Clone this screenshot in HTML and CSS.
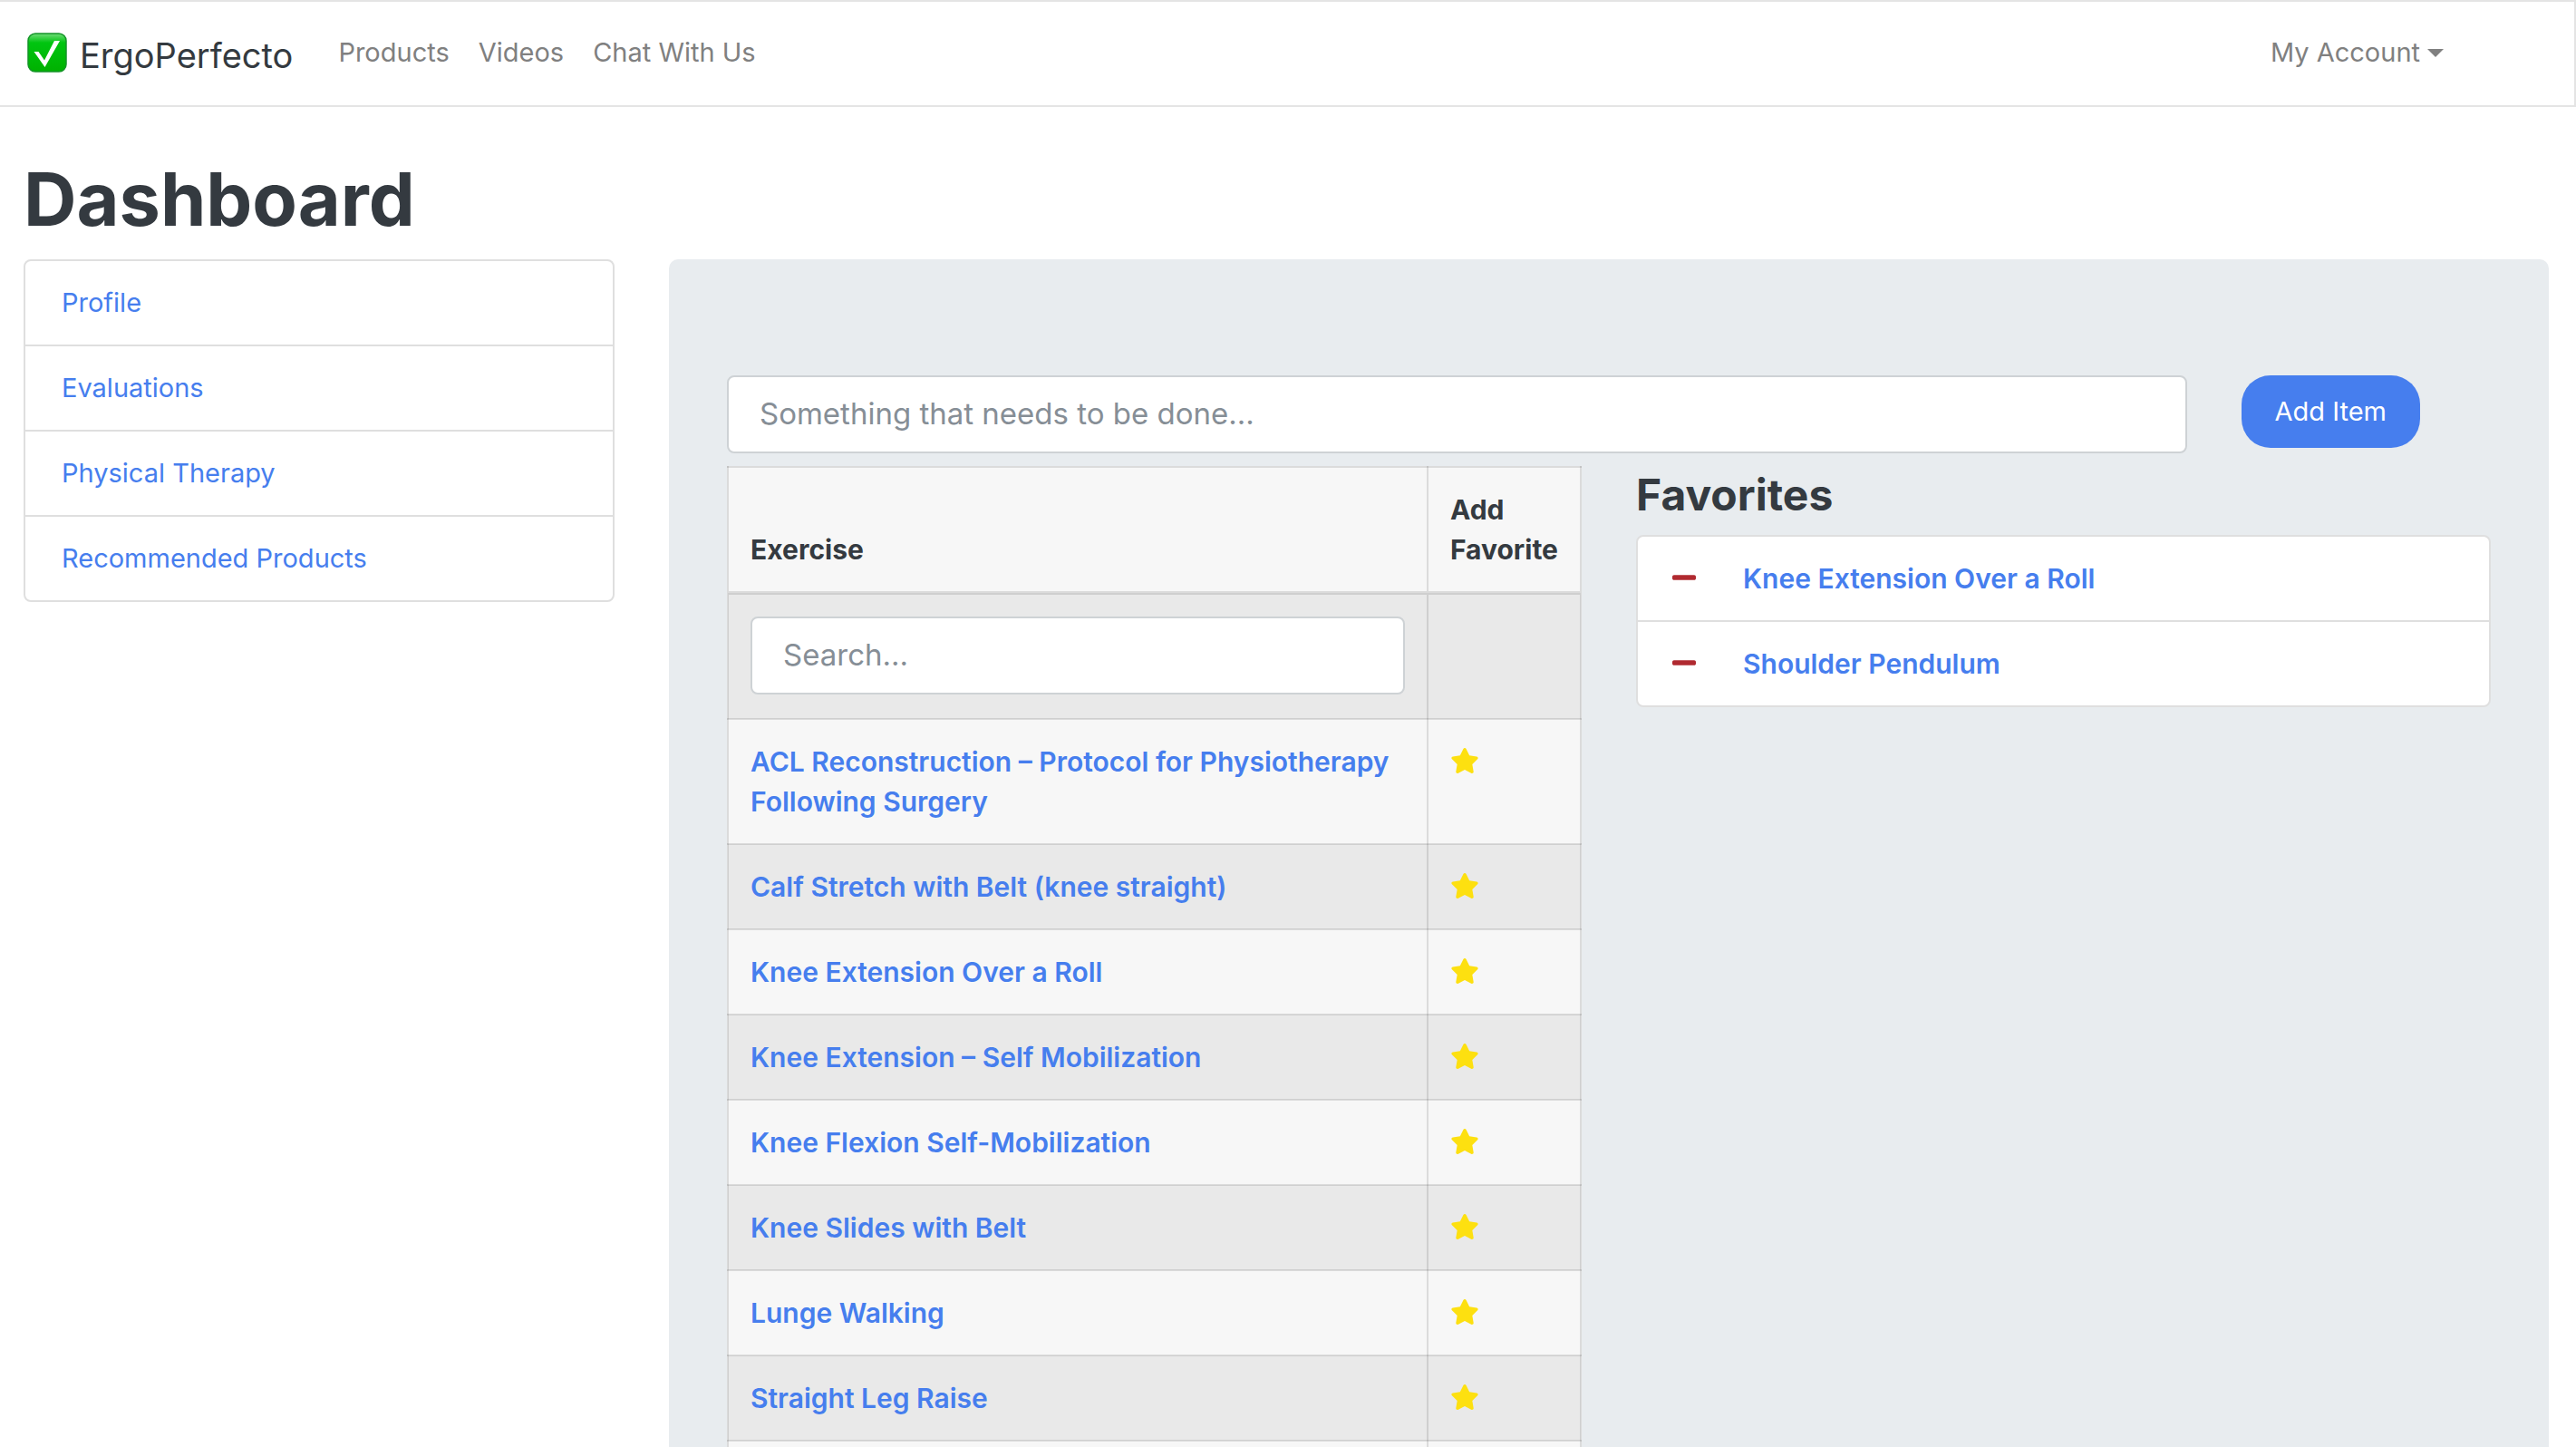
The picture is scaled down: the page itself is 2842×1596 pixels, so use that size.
FILE: index.html
```html
<!DOCTYPE html>
<html lang="en">
<head>
<meta charset="utf-8">
<meta name="viewport" content="width=device-width, initial-scale=1">
<title>ErgoPerfecto – Dashboard</title>
<link rel="stylesheet" href="styles.css">
</head>
<body>
<svg class="sprite" aria-hidden="true">
  <symbol id="star" viewBox="0 0 576 512"><path d="M259.300 17.800L194 150.200 47.900 171.500c-26.200 3.800-36.700 36.100-17.700 54.600l105.700 103-25 145.500c-4.500 26.300 23.200 46 46.400 33.700L288 439.600l130.700 68.700c23.200 12.200 50.900-7.400 46.400-33.700l-25-145.500 105.700-103c19-18.500 8.500-50.800-17.700-54.600L382 150.200 316.700 17.800c-11.700-23.600-45.600-23.900-57.400 0z"/></symbol>
  <symbol id="minus" viewBox="0 0 448 512"><path d="M416 208H32c-17.670 0-32 14.330-32 32v32c0 17.670 14.330 32 32 32h384c17.670 0 32-14.330 32-32v-32c0-17.670-14.330-32-32-32z"/></symbol>
</svg>
<header class="navbar">
  <a class="brand" href="#">
    <svg class="brand-mark" viewBox="0 0 44 44" aria-hidden="true">
      <defs><linearGradient id="mark" x1="0" y1="0" x2="0" y2="1"><stop offset="0" stop-color="#6fdc78"/><stop offset=".24" stop-color="#00c510"/><stop offset="1" stop-color="#00b100"/></linearGradient></defs>
      <rect x="1" y="1" width="42" height="42" rx="8" fill="url(#mark)" stroke="#149428" stroke-width="1.500"/>
      <path d="M7.500 21H12.500L19 30.500 30 9H36L19.500 38Z" fill="#fff"/>
    </svg>
    <span class="brand-name">ErgoPerfecto</span>
  </a>
  <nav class="nav-links">
    <a href="#">Products</a>
    <a href="#">Videos</a>
    <a href="#">Chat With Us</a>
  </nav>
  <button class="account" type="button">My Account<span class="caret"></span></button>
</header>
<main class="page">
  <h1>Dashboard</h1>
  <div class="columns">
    <nav class="list side">
      <a class="item" href="#">Profile</a>
      <a class="item" href="#">Evaluations</a>
      <a class="item" href="#">Physical Therapy</a>
      <a class="item" href="#">Recommended Products</a>
    </nav>
    <section class="panel">
      <form class="add-form">
        <input class="field" type="text" placeholder="Something that needs to be done..." aria-label="New item">
        <button class="add-button" type="button">Add Item</button>
      </form>
      <div class="content">
        <table class="exercises">
          <thead><tr><th>Exercise</th><th class="fav">Add Favorite</th></tr></thead>
          <tbody>
            <tr class="search-row"><td><input class="field" type="text" placeholder="Search..." aria-label="Search exercises"></td><td></td></tr>
            <tr><td><a href="#">ACL Reconstruction – Protocol for Physiotherapy Following Surgery</a></td><td><button class="icon-button" type="button" aria-label="Add favorite"><svg class="star"><use href="#star"/></svg></button></td></tr>
            <tr><td><a href="#">Calf Stretch with Belt (knee straight)</a></td><td><button class="icon-button" type="button" aria-label="Add favorite"><svg class="star"><use href="#star"/></svg></button></td></tr>
            <tr><td><a href="#">Knee Extension Over a Roll</a></td><td><button class="icon-button" type="button" aria-label="Add favorite"><svg class="star"><use href="#star"/></svg></button></td></tr>
            <tr><td><a href="#">Knee Extension – Self Mobilization</a></td><td><button class="icon-button" type="button" aria-label="Add favorite"><svg class="star"><use href="#star"/></svg></button></td></tr>
            <tr><td><a href="#">Knee Flexion Self-Mobilization</a></td><td><button class="icon-button" type="button" aria-label="Add favorite"><svg class="star"><use href="#star"/></svg></button></td></tr>
            <tr><td><a href="#">Knee Slides with Belt</a></td><td><button class="icon-button" type="button" aria-label="Add favorite"><svg class="star"><use href="#star"/></svg></button></td></tr>
            <tr><td><a href="#">Lunge Walking</a></td><td><button class="icon-button" type="button" aria-label="Add favorite"><svg class="star"><use href="#star"/></svg></button></td></tr>
            <tr><td><a href="#">Straight Leg Raise</a></td><td><button class="icon-button" type="button" aria-label="Add favorite"><svg class="star"><use href="#star"/></svg></button></td></tr>
            <tr><td></td><td></td></tr>
          </tbody>
        </table>
        <section class="favorites">
          <h2>Favorites</h2>
          <div class="list">
            <div class="item"><button class="icon-button" type="button" aria-label="Remove favorite"><svg class="minus"><use href="#minus"/></svg></button><a href="#">Knee Extension Over a Roll</a></div>
            <div class="item"><button class="icon-button" type="button" aria-label="Remove favorite"><svg class="minus"><use href="#minus"/></svg></button><a href="#">Shoulder Pendulum</a></div>
          </div>
        </section>
      </div>
    </section>
  </div>
</main>
</body>
</html>
```

FILE: styles.css
```css
* { box-sizing: border-box; }

body {
  margin: 0;
  height: 100vh;
  overflow: hidden;
  display: flex;
  flex-direction: column;
  background: #fff;
  color: #343a40;
  font: 400 29px/44px Inter, "Liberation Sans", sans-serif;
}

a { color: #467eee; text-decoration: none; }

button { font: inherit; border: 0; cursor: pointer; }

h1, h2 { margin: 0; font-weight: 700; }

.sprite { display: none; }

.navbar {
  flex: none;
  display: flex;
  align-items: center;
  height: 118px;
  padding: 0 144px 2px 30px;
  border: 2px solid #e4e4e4;
  border-left: 0;
}

.brand {
  display: flex;
  align-items: center;
  gap: 14px;
  margin-right: 50px;
  font-size: 38px;
  line-height: 56px;
  color: #343a40;
}

.brand-mark { width: 44px; height: 44px; }

.brand-name { padding-top: 6px; }

.nav-links { display: flex; gap: 32px; flex: 1; }

.nav-links a, .account { color: #808080; }

.account {
  display: flex;
  align-items: center;
  gap: 8px;
  padding: 0;
  background: none;
}

.caret {
  border: 9px solid transparent;
  border-top-color: #808080;
  border-bottom: 0;
}

.page {
  flex: 1;
  display: flex;
  flex-direction: column;
  padding: 54px 30px 0 26px;
}

h1 { font-size: 81px; line-height: 96px; padding-bottom: 18px; }

.columns { flex: 1; display: flex; gap: 60px; align-items: flex-start; }

.list {
  background: #fff;
  border: 2px solid #dfdfdf;
  border-radius: 8px;
}

.side { flex: 0 0 652px; }

.item {
  display: flex;
  align-items: center;
  height: 94px;
  padding: 0 40px;
  border-bottom: 2px solid #dfdfdf;
}

.item:last-child { height: 92px; border-bottom: 0; }

.panel {
  flex: 1;
  align-self: stretch;
  padding: 128px 64px 0;
  background: #e8ecef;
  border-radius: 10px 10px 0 0;
}

.add-form {
  display: flex;
  align-items: flex-start;
  gap: 60px;
  margin-bottom: 14px;
}

.field {
  display: block;
  flex: 1;
  width: 100%;
  height: 86px;
  padding: 0 34px 2px;
  border: 2px solid #ced2d5;
  border-radius: 8px;
  background: #fff;
  font: inherit;
  font-size: 33px;
  font-weight: 400;
}

.field::placeholder { color: #868e96; opacity: 1; }

.add-button {
  height: 80px;
  margin-right: 78px;
  padding: 0 37px;
  border-radius: 32px;
  background: #467eee;
  color: #fff;
}

.content { display: grid; grid-template-columns: 1fr 1fr; gap: 60px; align-items: start; }

.exercises {
  width: 100%;
  table-layout: fixed;
  border-collapse: collapse;
  background: #f7f7f7;
  font-size: 30px;
  font-weight: 600;
}

.exercises th, .exercises td {
  height: 94px;
  padding: 24px;
  border: 2px solid rgba(0, 0, 0, .11);
  text-align: left;
  vertical-align: top;
}

.exercises th { vertical-align: bottom; border-bottom-width: 4px; }

.exercises .fav { width: 169px; padding-right: 16px; }

.exercises .search-row td { padding-bottom: 26px; }

.exercises tbody tr:nth-child(odd) { background: #e9e9e9; }

.exercises tbody tr:nth-child(even) { background: #f7f7f7; }

.icon-button {
  display: flex;
  align-items: center;
  height: 44px;
  padding: 0 0 2px;
  background: none;
}

.star { width: 32px; height: 28px; fill: #fde010; }

.minus { width: 26px; height: 30px; fill: #b02a30; }

.favorites .item { gap: 52px; padding: 0 38px; font-size: 30px; font-weight: 600; }

h2 { font-size: 48px; line-height: 60px; padding: 2px 0 14px; }
```
